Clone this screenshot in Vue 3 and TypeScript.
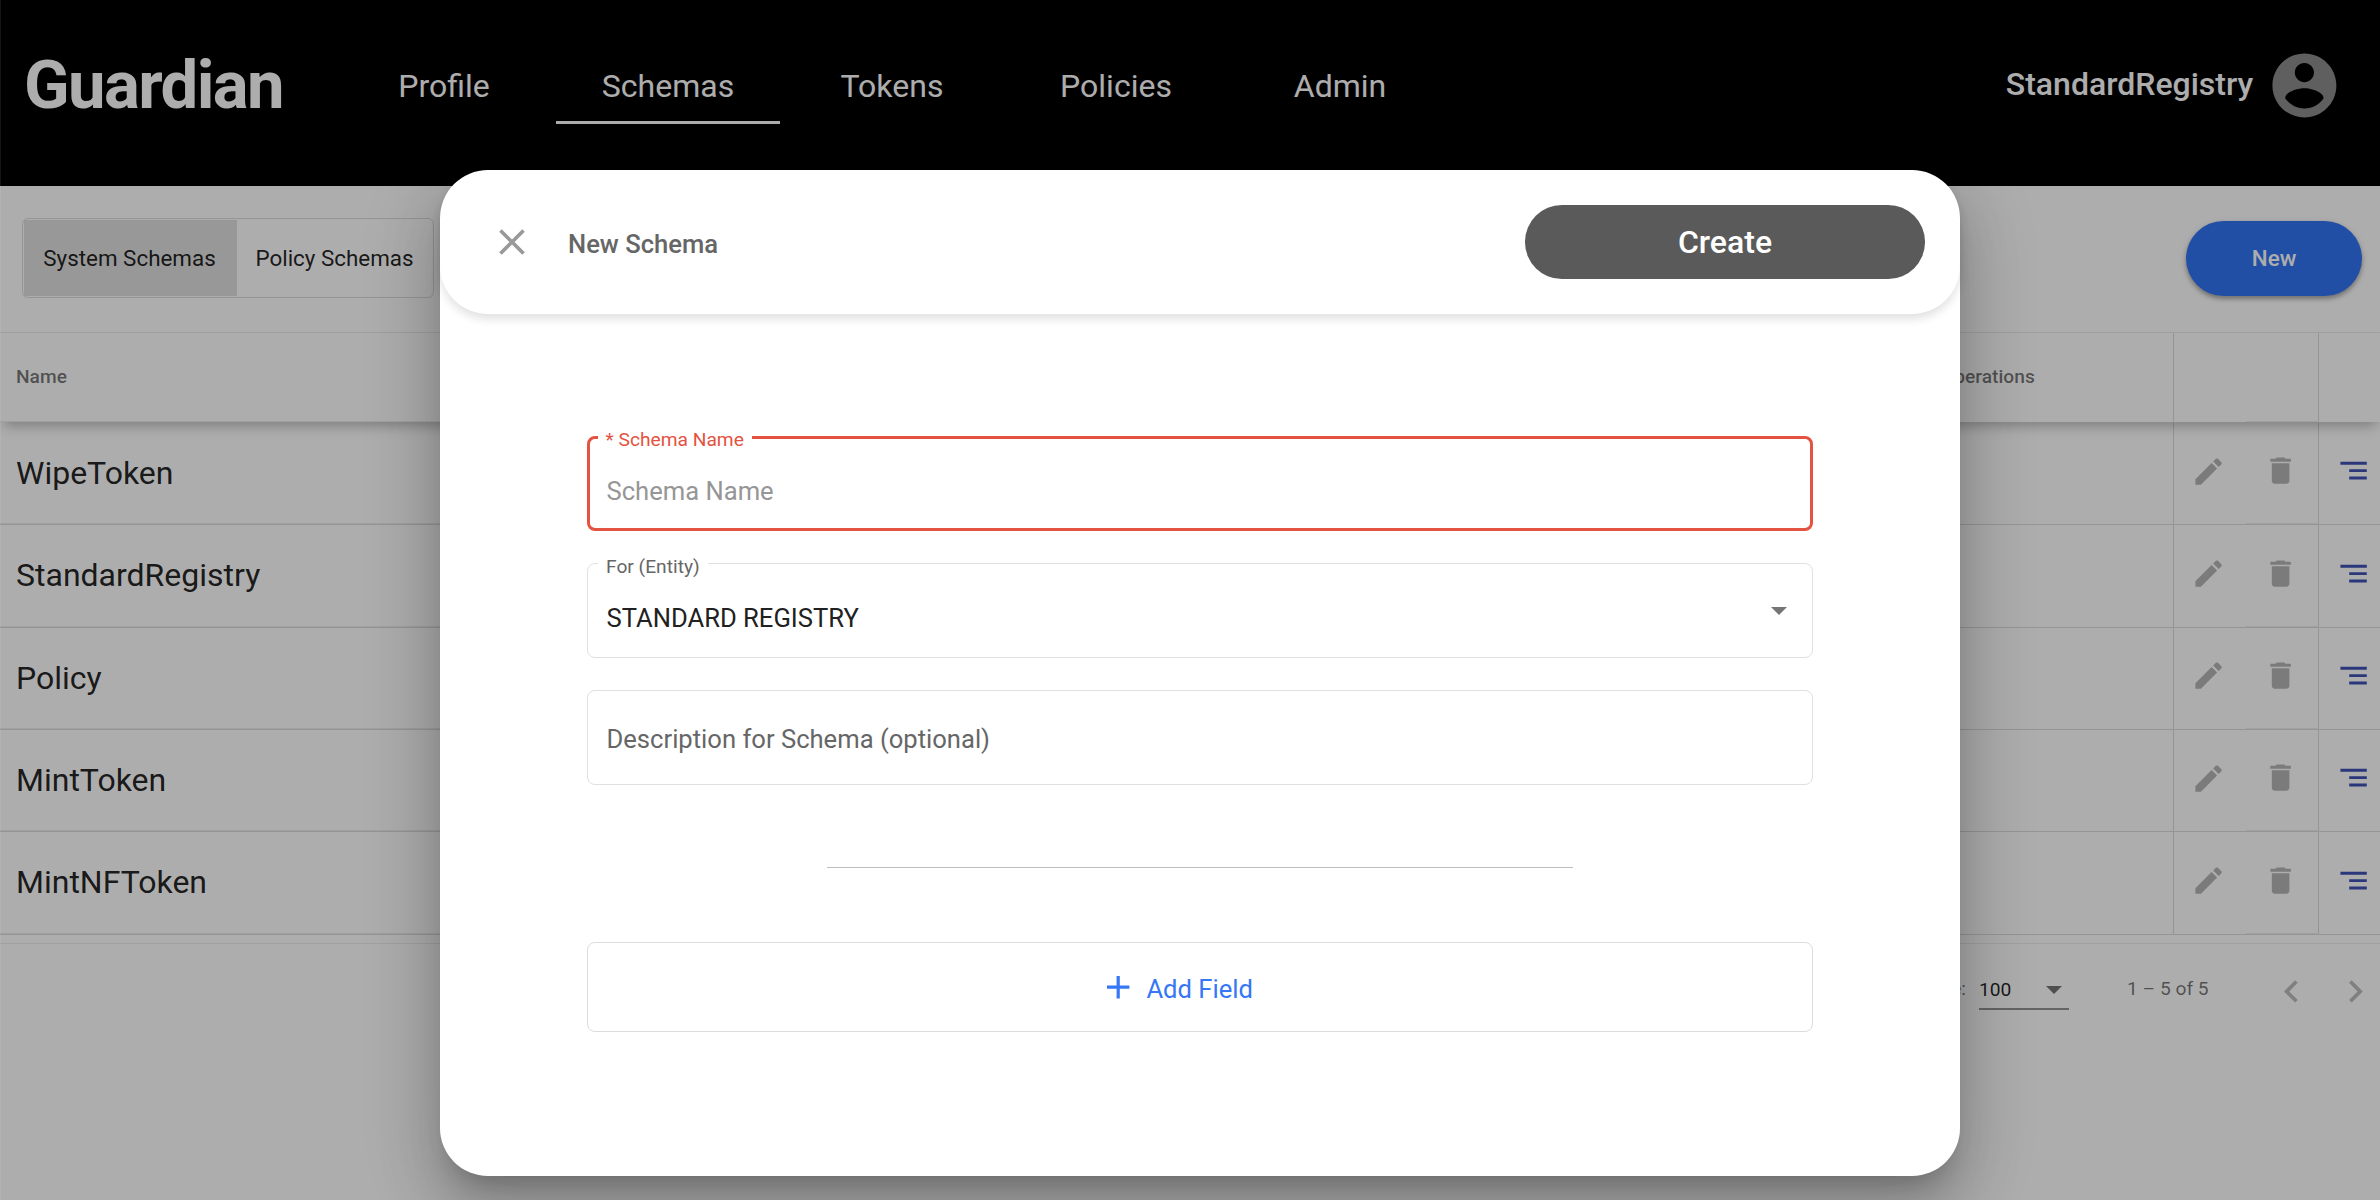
<script setup lang="ts">
interface NavItem {
  label: string
  active?: boolean
}

const navItems: NavItem[] = [
  { label: 'Profile' },
  { label: 'Schemas', active: true },
  { label: 'Tokens' },
  { label: 'Policies' },
  { label: 'Admin' },
]

const schemas: string[] = ['WipeToken', 'StandardRegistry', 'Policy', 'MintToken', 'MintNFToken']
</script>

<template>
  <div class="app">
    <header class="topbar">
      <div class="logo">Guardian</div>
      <nav class="nav">
        <a v-for="item in navItems" :key="item.label" class="nav-item" :class="{ active: item.active }">{{ item.label }}</a>
      </nav>
      <div class="user">
        <span class="user-name">StandardRegistry</span>
        <svg class="avatar" viewBox="0 0 24 24"><path d="M12 2C6.48 2 2 6.48 2 12s4.48 10 10 10 10-4.48 10-10S17.52 2 12 2zm0 3c1.66 0 3 1.34 3 3s-1.34 3-3 3-3-1.34-3-3 1.34-3 3-3zm0 14.2c-2.5 0-4.71-1.28-6-3.22.03-1.99 4-3.08 6-3.08 1.99 0 5.97 1.09 6 3.08-1.29 1.94-3.5 3.22-6 3.22z" /></svg>
      </div>
    </header>

    <div class="toolbar">
      <div class="toggle">
        <button class="toggle-btn system selected">System Schemas</button>
        <button class="toggle-btn policy">Policy Schemas</button>
      </div>
      <button class="new-btn">New</button>
    </div>

    <div class="table">
      <div class="row head">
        <div class="cell name">Name</div>
        <div class="cell operations">Operations</div>
        <div class="cell edit"></div>
        <div class="cell trash"></div>
        <div class="cell tree"></div>
      </div>
      <div v-for="schema in schemas" :key="schema" class="row">
        <div class="cell name">{{ schema }}</div>
        <div class="cell operations"></div>
        <div class="cell edit">
          <svg class="icon" viewBox="0 0 24 24"><path d="M3 17.25V21h3.75L17.81 9.94l-3.75-3.75L3 17.25zM20.71 7.04c.39-.39.39-1.02 0-1.41l-2.34-2.34c-.39-.39-1.02-.39-1.41 0l-1.83 1.83 3.75 3.75 1.83-1.83z" /></svg>
        </div>
        <div class="cell trash">
          <svg class="icon" viewBox="0 0 24 24"><path d="M6 19c0 1.1.9 2 2 2h8c1.1 0 2-.9 2-2V7H6v12zM19 4h-3.5l-1-1h-5l-1 1H5v2h14V4z" /></svg>
        </div>
        <div class="cell tree">
          <svg class="icon indigo" viewBox="0 0 24 24"><path d="M9 18h12v-2H9v2zM3 6v2h18V6H3zm6 7h12v-2H9v2z" /></svg>
        </div>
      </div>
    </div>

    <div class="paginator">
      <span class="per-page">Items per page:</span>
      <div class="page-size">
        <span>100</span>
        <svg class="caret" viewBox="0 0 16 8"><path d="M0 0h16L8 8z" /></svg>
      </div>
      <span class="range">1 – 5 of 5</span>
      <svg class="chevron prev" viewBox="0 0 24 24"><path d="M15.41 7.41L14 6l-6 6 6 6 1.41-1.41L10.83 12z" /></svg>
      <svg class="chevron" viewBox="0 0 24 24"><path d="M10 6L8.59 7.41 13.17 12l-4.58 4.59L10 18l6-6z" /></svg>
    </div>

    <div class="backdrop"></div>

    <section class="dialog">
      <div class="dialog-head">
        <svg class="close" viewBox="0 0 24 24"><path d="M19 6.41L17.59 5 12 10.59 6.41 5 5 6.41 10.59 12 5 17.59 6.41 19 12 13.41 17.59 19 19 17.59 13.41 12z" /></svg>
        <h2 class="dialog-title">New Schema</h2>
        <button class="create-btn">Create</button>
      </div>
      <div class="form">
        <fieldset class="field invalid">
          <legend>* Schema Name</legend>
          <div class="field-body">
            <span class="placeholder">Schema Name</span>
          </div>
        </fieldset>
        <fieldset class="field entity">
          <legend>For (Entity)</legend>
          <div class="field-body">
            <span class="value">STANDARD REGISTRY</span>
            <svg class="caret select-caret" viewBox="0 0 16 8"><path d="M0 0h16L8 8z" /></svg>
          </div>
        </fieldset>
        <div class="field description">Description for Schema (optional)</div>
        <div class="divider"></div>
        <button class="add-field">
          <svg class="plus" viewBox="0 0 24 24"><path d="M19 13h-6v6h-2v-6H5v-2h6V5h2v6h6v2z" /></svg>
          <span>Add Field</span>
        </button>
      </div>
    </section>
  </div>
</template>

<style>
body {
  margin: 0;
  overflow: hidden;
}
</style>

<style scoped>
* {
  box-sizing: border-box;
}

.app {
  position: relative;
  width: 2380px;
  height: 1200px;
  overflow: hidden;
  background: #fff;
  color: rgba(0, 0, 0, 0.87);
  font-family: Roboto, "Liberation Sans", sans-serif;
}

button {
  margin: 0;
  padding: 0;
  border: 0;
  background: none;
  color: inherit;
  font-family: inherit;
}

svg {
  display: block;
  flex: none;
}

.topbar {
  display: flex;
  align-items: center;
  height: 186px;
  padding: 0 37px 14px 24px;
  background: #000;
  color: #fff;
}

.logo {
  width: 308px;
  padding-bottom: 2px;
  font-size: 67px;
  font-weight: 700;
  letter-spacing: -1.6px;
}

.nav {
  display: flex;
}

.nav-item {
  width: 224px;
  height: 73px;
  margin-top: 3px;
  border-bottom: 3px solid transparent;
  font-size: 32px;
  line-height: 70px;
  text-align: center;
}

.nav-item.active {
  border-bottom-color: #fff;
}

.user {
  display: flex;
  align-items: center;
  margin-left: auto;
}

.user-name {
  margin: 0 13px 4px 0;
  font-size: 32px;
  font-weight: 500;
}

.avatar {
  width: 76.8px;
  height: 76.8px;
  margin-bottom: 1px;
  fill: #8d8d8d;
}

.toolbar {
  display: flex;
  align-items: flex-start;
  justify-content: space-between;
  height: 146px;
  padding: 32px 18px 0 22px;
}

.toggle {
  display: flex;
  width: 412px;
  height: 80px;
  padding: 1px;
  border: 1px solid #dcdcdc;
  border-radius: 6px;
}

.toggle-btn {
  font-size: 22.4px;
  line-height: 76px;
}

.toggle-btn.system {
  width: 213px;
  padding-right: 2px;
}

.toggle-btn.policy {
  flex: 1;
}

.toggle-btn.selected {
  background: #e0e0e0;
}

.new-btn {
  width: 176px;
  height: 75px;
  margin-top: 3px;
  padding-bottom: 1px;
  border-radius: 37.5px;
  background: #3375f5;
  box-shadow: 0 3px 4px rgba(0, 0, 0, 0.26), 0 2px 7px rgba(0, 0, 0, 0.14);
  color: #fff;
  font-size: 22.4px;
  font-weight: 500;
}

.table {
  border-top: 1px solid #ececec;
}

.row {
  display: flex;
  height: 102.4px;
  border-bottom: 1px solid #dcdcdc;
  font-size: 32px;
}

.row.head {
  position: relative;
  height: 89px;
  margin-bottom: 0.8px;
  border-bottom: 0;
  box-shadow: 0 8px 12px -4px rgba(0, 0, 0, 0.27);
  color: rgba(0, 0, 0, 0.54);
  font-size: 19.2px;
  font-weight: 500;
}

.cell {
  display: flex;
  align-items: center;
}

.cell.name {
  width: 1936px;
  padding: 0 0 0.4px 16px;
  border-bottom: 1px solid #ececec;
}

.cell.operations {
  width: 238px;
  padding: 0 0 2px 5px;
  border-right: 1px solid #dadada;
}

.cell.edit,
.cell.trash {
  width: 72px;
  padding: 0 3.5px 4.5px 0;
  justify-content: center;
}

.cell.trash {
  width: 73px;
  border-right: 1px solid #dadada;
  border-bottom: 1px solid #ececec;
}

.cell.tree {
  flex: 1;
  padding: 0 0 5.5px 17px;
}

.icon {
  width: 35.2px;
  height: 35.2px;
  fill: #b5b5b5;
}

.icon.indigo {
  fill: #3f51b5;
}

.paginator {
  display: flex;
  align-items: center;
  height: 96px;
  margin-top: 8px;
  padding-bottom: 2px;
  border-top: 1px solid #ececec;
  color: rgba(0, 0, 0, 0.54);
  font-size: 19.2px;
}

.per-page {
  width: 1966px;
  padding-bottom: 4px;
  text-align: right;
}

.page-size {
  display: flex;
  align-items: center;
  justify-content: space-between;
  width: 90px;
  height: 31px;
  margin: 8px 58px 0 13px;
  padding: 0 7px 7px 0;
  border-bottom: 2px solid #949494;
  color: rgba(0, 0, 0, 0.87);
}

.caret {
  width: 16px;
  height: 8px;
  fill: #757575;
}

.range {
  width: 142px;
  padding-bottom: 4px;
}

.chevron {
  width: 44.8px;
  height: 44.8px;
  margin-top: 3px;
  fill: #bdbdbd;
}

.chevron.prev {
  margin-right: 19px;
}

.backdrop {
  position: absolute;
  inset: 0;
  z-index: 2;
  background: rgba(0, 0, 0, 0.32);
  box-shadow: inset 1px 0 rgba(255, 255, 255, 0.08);
}

.dialog {
  position: absolute;
  z-index: 3;
  top: 170px;
  left: 440px;
  width: 1520px;
  height: 1006px;
  border-radius: 48px;
  background: #fff;
  box-shadow: 0 17.6px 24px -11.2px rgba(0, 0, 0, 0.2), 0 38.4px 60.8px 4.8px rgba(0, 0, 0, 0.14),
    0 14.4px 73.6px 12.8px rgba(0, 0, 0, 0.12);
}

.dialog-head {
  display: flex;
  align-items: center;
  height: 144px;
  padding: 0 35px 0 50px;
  border-radius: 48px;
  box-shadow: 0 5px 10px rgba(0, 0, 0, 0.12);
}

.close {
  width: 44px;
  height: 44px;
  margin-bottom: 1px;
  fill: #999;
}

.dialog-title {
  margin: 4px 0 0 34px;
  color: #666;
  font-size: 25.6px;
  font-weight: 500;
}

.create-btn {
  width: 400px;
  height: 73.6px;
  margin-left: auto;
  border-radius: 36.8px;
  background: #5a5a5a;
  color: #fff;
  font-size: 32px;
  font-weight: 500;
}

.form {
  display: flex;
  flex-direction: column;
  width: 1226px;
  margin: 122px auto 0 147px;
}

.field {
  display: flex;
  align-items: center;
  height: 95px;
  margin: 0 0 32px;
  border: 1px solid #e0e0e0;
  border-radius: 8px;
  font-size: 25.6px;
}

/* The legend's lower half sits inside the frame, its upper half above it */
fieldset.field {
  display: block;
  height: 106px;
  margin-top: -11px;
  padding: 0 18.5px;
}

.field legend {
  height: 23px;
  padding: 0 8px;
  margin-left: -8.5px;
  font-size: 19.2px;
  line-height: 29px;
}

fieldset.invalid {
  height: 105px;
  margin-top: -10px;
  padding: 0 16.5px;
  border: 3px solid #e45241;
}

.field.invalid legend {
  margin-left: -9px;
  color: #e45241;
  line-height: 28px;
}

.field-body {
  display: flex;
  align-items: center;
  padding-top: 28px;
}

.invalid .field-body {
  padding-top: 27px;
}

.placeholder {
  color: #969696;
}

.field.entity legend {
  color: #666;
}

.value {
  flex: 1;
  color: #212121;
}

.select-caret {
  margin: 0 6.5px 14px 0;
}

.field.description {
  padding: 2px 18.5px 0;
  color: #666;
}

.divider {
  width: 746px;
  height: 1px;
  margin: 50px auto 74px;
  background: #bdbdbd;
}

.add-field {
  display: flex;
  align-items: center;
  height: 90px;
  padding-left: 511px;
  border: 1px solid #dcdcdc;
  border-radius: 8px;
  color: #3577f6;
  font-size: 25.6px;
}

.add-field span {
  margin: 4px 0 0 9px;
}

.plus {
  width: 38.4px;
  height: 38.4px;
  fill: currentColor;
}
</style>
